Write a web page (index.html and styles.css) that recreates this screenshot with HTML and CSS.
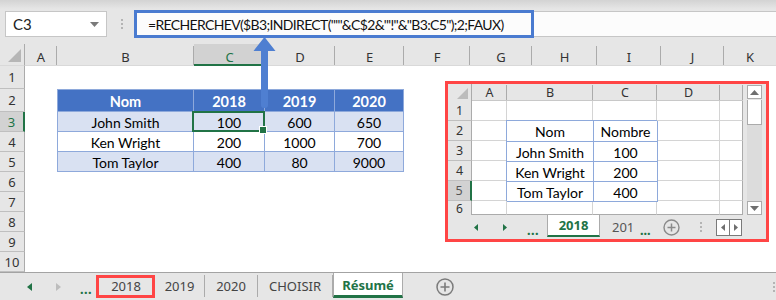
FILE: index.html
```html
<!DOCTYPE html>
<html lang="fr">
<head>
<meta charset="utf-8">
<link rel="stylesheet" href="styles.css">
</head>
<body>
<div class="app">
  <div class="fbar">
    <div class="namebox"><span>C3</span><svg class="dd" width="9" height="5" viewBox="0 0 9 5"><polygon points="0,0 9,0 4.5,5" fill="#7a7a7a"/></svg></div>
    <div class="vdots"><i></i><i></i><i></i></div>
    <div class="finput"><div class="formula">=RECHERCHEV($B3;INDIRECT("'"&amp;C$2&amp;"'!"&amp;"B3:C5");2;FAUX)</div></div>
  </div>

  <div class="sheet">
    <div class="corner"><svg width="13" height="13" viewBox="0 0 13 13"><polygon points="13,0 13,13 0,13" fill="#b6b6b6"/></svg></div>
    <div class="ch">A</div><div class="ch">B</div><div class="ch sel">C</div><div class="ch">D</div><div class="ch">E</div><div class="ch">F</div><div class="ch">G</div><div class="ch">H</div><div class="ch">I</div><div class="ch">J</div><div class="ch last">K</div>
    <div class="rh">1</div><div class="rh">2</div><div class="rh sel">3</div><div class="rh">4</div><div class="rh">5</div><div class="rh">6</div><div class="rh">7</div><div class="rh">8</div><div class="rh">9</div><div class="rh">10</div>

    <div class="tbl">
      <div class="c hd">Nom</div><div class="c hd">2018</div><div class="c hd">2019</div><div class="c hd">2020</div>
      <div class="c band">John Smith</div><div class="c band sel">100</div><div class="c band">600</div><div class="c band">650</div>
      <div class="c">Ken Wright</div><div class="c">200</div><div class="c">1000</div><div class="c">700</div>
      <div class="c band">Tom Taylor</div><div class="c band">400</div><div class="c band">80</div><div class="c band">9000</div>
    </div>
  </div>

  <div class="tabs">
    <div class="nav">
      <svg class="nl" width="5" height="8" viewBox="0 0 5 8"><polygon points="5,0 5,8 0,4" fill="#217346"/></svg>
      <svg class="nr" width="5" height="8" viewBox="0 0 5 8"><polygon points="0,0 0,8 5,4" fill="#bdbdbd"/></svg>
      <span class="more">...</span>
    </div>
    <div class="tab hl" style="width:57px">2018</div>
    <div class="tab" style="width:50px">2019</div>
    <div class="tab" style="width:53px">2020</div>
    <div class="tab" style="width:75px">CHOISIR</div>
    <div class="tab active" style="width:70px">Résumé</div>
    <svg class="plus" width="18" height="18" viewBox="0 0 18 18"><circle cx="9" cy="9" r="8" fill="none" stroke="#7b7b7b" stroke-width="1.5"/><path d="M9 4.5v9M4.5 9h9" stroke="#7b7b7b" stroke-width="1.6"/></svg>
    <div class="rdots"><i></i><i></i><i></i></div>
  </div>

  <svg class="arrow" width="26" height="74" viewBox="0 0 26 74"><path d="M12.5 0 L23.5 14 L16 14 L16 68 Q16 71 13 71 L12 71 Q9 71 9 68 L9 14 L1.5 14 Z" fill="#4f7fd1"/></svg>

  <div class="mini">
    <div class="mtop">
      <div class="msheet">
        <div class="mcorner"><svg width="11" height="11" viewBox="0 0 11 11"><polygon points="11,0 11,11 0,11" fill="#bcbcbc"/></svg></div>
        <div class="mch">A</div><div class="mch">B</div><div class="mch">C</div><div class="mch">D</div><div class="mch"></div>

        <div class="mtbl">
          <div class="mc2">Nom</div><div class="mc2">Nombre</div>
          <div class="mc2">John Smith</div><div class="mc2">100</div>
          <div class="mc2">Ken Wright</div><div class="mc2">200</div>
          <div class="mc2">Tom Taylor</div><div class="mc2">400</div>
        </div>

        <div class="mrh">1</div><div class="mc"></div><div class="mc"></div><div class="mc"></div><div class="mc"></div><div class="mc e"></div>
        <div class="mrh">2</div><div class="mc"></div><div class="mc"></div><div class="mc e"></div>
        <div class="mrh">3</div><div class="mc"></div><div class="mc"></div><div class="mc e"></div>
        <div class="mrh">4</div><div class="mc"></div><div class="mc"></div><div class="mc e"></div>
        <div class="mrh sel">5</div><div class="mc"></div><div class="mc"></div><div class="mc e"></div>
        <div class="mrh cut">6</div><div class="mc cut"></div><div class="mc cut"></div><div class="mc cut"></div><div class="mc cut"></div><div class="mc e cut"></div>
      </div>
      <div class="mscroll">
        <div class="sbtn"><svg width="9" height="5" viewBox="0 0 9 5"><polygon points="0,5 9,5 4.5,0" fill="#6f6f6f"/></svg></div>
        <div class="thumb"></div>
        <div class="track"></div>
        <div class="sbtn"><svg width="9" height="5" viewBox="0 0 9 5"><polygon points="0,0 9,0 4.5,5" fill="#6f6f6f"/></svg></div>
      </div>
    </div>
    <div class="mtabs">
      <svg class="mnl" width="4" height="7" viewBox="0 0 4 7"><polygon points="4,0 4,7 0,3.5" fill="#217346"/></svg>
      <svg class="mnr" width="4" height="7" viewBox="0 0 4 7"><polygon points="0,0 0,7 4,3.5" fill="#217346"/></svg>
      <span class="mmore">...</span>
      <div class="mtab">2018</div>
      <span class="mtab2">201</span>
      <span class="mmore2">...</span>
      <svg class="mplus" width="17" height="17" viewBox="0 0 17 17"><circle cx="8.5" cy="8.5" r="7.5" fill="none" stroke="#8a8a8a" stroke-width="1.4"/><path d="M8.5 4.5v8M4.5 8.5h8" stroke="#8a8a8a" stroke-width="1.5"/></svg>
      <div class="mvdots"><i></i><i></i><i></i></div>
      <div class="mscr">
        <div class="mscb"><svg width="4" height="7" viewBox="0 0 4 7"><polygon points="4,0 4,7 0,3.5" fill="#6f6f6f"/></svg></div>
        <div class="mscb"><svg width="4" height="7" viewBox="0 0 4 7"><polygon points="0,0 0,7 4,3.5" fill="#6f6f6f"/></svg></div>
      </div>
    </div>
  </div>
</div>
</body>
</html>
```

FILE: styles.css
```css
* { box-sizing: border-box; margin: 0; padding: 0; }
html, body { width: 776px; height: 300px; overflow: hidden; background: #fff; }
body { font-family: Lato, "Liberation Sans", sans-serif; color: #000; }
.app { position: relative; width: 776px; height: 300px; display: flex; flex-direction: column; }

/* formula bar */
.fbar { height: 44px; flex: none; display: flex; align-items: flex-start; padding-top: 11px;
  background: linear-gradient(#d3d3d3, #e6e6e6 9px, #e6e6e6); }
.namebox { margin-left: 5px; width: 102px; height: 26px; background: #fff; border: 1px solid #c6c6c6;
  display: flex; align-items: center; justify-content: space-between; padding: 0 7px 0 7px;
  font-size: 15px; color: #222; }
.vdots { width: 27px; height: 26px; display: flex; flex-direction: column; align-items: center; justify-content: center; gap: 2px; padding-left: 3px; }
.vdots i, .rdots i, .mvdots i { display: block; width: 2px; height: 2px; background: #b4b4b4; }
.finput { flex: 1; height: 26px; background: #fcfcfc; border-top: 1px solid #c6c6c6; border-bottom: 1px solid #c6c6c6; }
.formula { width: 400px; height: 28px; margin-top: -2px; border: 3px solid #4a7bd0; padding-left: 11px;
  display: flex; align-items: center; font-size: 14px; letter-spacing: -0.65px; color: #111; white-space: nowrap; }

/* sheet */
.sheet { flex: none; height: 228px; display: grid;
  grid-template-columns: 25px 32px 137px 71px 70px 69px 66px 62px 65px 64px 63px 1fr;
  grid-template-rows: 22px 23px 23px repeat(8, 20px); background: #fff; }
.corner { background: #e6e6e6; border-right: 1px solid #ababab; border-bottom: 1px solid #d9d9d9;
  display: flex; align-items: flex-end; justify-content: flex-end; padding: 0 3px 3px 0; }
.ch { background: linear-gradient(#ababab, #ababab) right bottom / 1px 19px no-repeat, #e6e6e6;
  border-bottom: 1px solid #d9d9d9; display: flex; align-items: center; justify-content: center;
  padding-top: 4px; font-family: "Noto Sans", sans-serif; font-size: 13px; color: #333; }
.ch.last { background: #e6e6e6; }
.ch.sel { background-color: #d2d2d2; color: #217346; border-bottom: 2px solid #217346; padding-top: 5px; }
.rh { grid-column: 1; background: #e6e6e6; border-right: 1px solid #ababab; border-bottom: 1px solid #bfbfbf;
  display: flex; align-items: center; justify-content: center; font-family: "Noto Sans", sans-serif; font-size: 13px; color: #333; }
.rh.sel { background: #d2d2d2; color: #217346; border-right: 2px solid #217346; }

.tbl { grid-column: 3 / 7; grid-row: 3 / 7; display: grid; grid-template-columns: 136px 71px 70px 69px;
  grid-template-rows: 22px 20px 20px 20px; border-left: 1px solid #8ea9db; border-top: 1px solid #8ea9db; }
.c { border-right: 1px solid #8ea9db; border-bottom: 1px solid #8ea9db; display: flex; align-items: center;
  justify-content: center; font-size: 14px; padding-top: 1px; }
.c.hd { background: #4472c4; color: #fff; font-weight: 700; font-size: 14.5px; }
.c.band { background: #d9e1f2; }
.c.sel { position: relative; }
.c.sel::after { content: ""; position: absolute; left: -2px; top: -1px; right: -1px; bottom: -1px; border: 2px solid #217346; }
.c.sel::before { content: ""; position: absolute; right: -3px; bottom: -3px; width: 6px; height: 6px; background: #217346; border: 1px solid #fff; z-index: 2; }

/* tabs */
.tabs { flex: 1; background: #e6e6e6; border-top: 1px solid #a3a3a3; display: flex; align-items: stretch; position: relative; }
.nav { width: 98px; display: flex; align-items: center; }
.nl { margin-left: 27px; }
.nr { margin-left: 24px; }
.more { margin-left: 19px; color: #217346; font-weight: 700; font-size: 15px; letter-spacing: 0.5px; padding-top: 2px; }
.tab { border-right: 1px solid #ababab; margin: 2px 0 3px; display: flex; align-items: center; justify-content: center;
  font-family: "Noto Sans", sans-serif; font-size: 13px; color: #444; }
.tab.hl { position: relative; }
.tab.hl::after { content: ""; position: absolute; left: -2px; top: 0; right: -1px; bottom: -1px; border: 3px solid #ff4545; }
.tab.active { margin: 0 0 2px; background: #fff; border-left: 1px solid #ababab; border-bottom: 3px solid #217346;
  color: #217346; font-weight: 700; padding-top: 2px; }
.plus { align-self: center; margin-left: 33px; }
.rdots { margin-left: auto; margin-right: 1px; display: flex; flex-direction: column; justify-content: center; gap: 2px; }

/* arrow */
.arrow { position: absolute; left: 252px; top: 37px; }

/* mini screenshot */
.mini { position: absolute; left: 445px; top: 81px; width: 324px; height: 161px; border: 3px solid #ff4545;
  background: #e6e6e6; display: flex; flex-direction: column; }
.mtop { display: flex; height: 131px; }
.msheet { width: 295px; display: grid; grid-template-columns: 24px 35px 86px 64px 63px 23px;
  grid-template-rows: 17px 20px 20px 20px 20px 20px 14px; }
.mcorner { border-right: 1px solid #ababab; display: flex; align-items: flex-end; justify-content: flex-end; padding: 0 3px 2px 0; }
.mch { background: linear-gradient(#ababab, #ababab) right bottom / 1px 15px no-repeat, #e6e6e6;
  border-bottom: 1px solid #c8c8c8; display: flex; align-items: center; justify-content: center;
  font-family: "Noto Sans", sans-serif; font-size: 12.5px; color: #333; padding-top: 1px; }
.mrh { grid-column: 1; border-right: 1px solid #ababab; border-bottom: 1px solid #bfbfbf; display: flex; align-items: center;
  justify-content: center; font-family: "Noto Sans", sans-serif; font-size: 12.5px; color: #333; }
.mrh.sel { background: #d2d2d2; border-right: 2px solid #217346; color: #555; }
.mrh.cut { border-bottom: none; align-items: flex-start; line-height: 13px; padding-top: 1px; font-size: 12px; }
.mc { background: #fff; border-right: 1px solid #d4d4d4; border-bottom: 1px solid #d4d4d4; }
.mc.e { border-right: 1px solid #ababab; }
.mc.cut { border-bottom: 1px solid #ababab; }
.mtbl { grid-column: 3 / 5; grid-row: 3 / 7; margin: -1px 0 0 -1px; display: grid; grid-template-columns: 87px 64px;
  grid-template-rows: 21px 20px 20px 20px; border-left: 1px solid #8ea9db; border-top: 1px solid #8ea9db; background: #fff; position: relative; z-index: 1; }
.mc2 { border-right: 1px solid #8ea9db; border-bottom: 1px solid #8ea9db; display: flex; align-items: center; justify-content: center;
  font-size: 14px; padding-top: 1px; }
.mscroll { width: 23px; padding: 1px 4px 0; display: flex; flex-direction: column; }
.sbtn { height: 14px; flex: none; background: #fff; border: 1px solid #ababab; display: flex; align-items: center; justify-content: center; }
.thumb { height: 25px; flex: none; background: #fff; border: 1px solid #ababab; border-top: none; margin-top: 1px; }
.track { flex: 1; background: #dcdcdc; }
.mtabs { flex: 1; display: flex; align-items: center; }
.mnl { margin-left: 26px; }
.mnr { margin-left: 25px; }
.mmore { margin-left: 20px; width: 16px; color: #217346; font-weight: 700; font-size: 15px; letter-spacing: 0.5px; padding-top: 3px; }
.mtab { margin-left: 4px; width: 53px; align-self: stretch; margin-bottom: 2px; background: #fff; border-left: 1px solid #ababab;
  border-right: 1px solid #ababab; border-bottom: 2px solid #217346; display: flex; align-items: center; justify-content: center;
  font-family: "Noto Sans", sans-serif; font-weight: 700; font-size: 13px; color: #217346; }
.mtab2 { margin-left: 12px; width: 20px; font-family: "Noto Sans", sans-serif; font-size: 13px; color: #555; }
.mmore2 { margin-left: 8px; width: 12px; color: #217346; font-weight: 700; font-size: 15px; padding-top: 3px; }
.mplus { margin-left: 11px; }
.mvdots { margin-left: 20px; display: flex; flex-direction: column; gap: 2px; }
.mscr { margin-left: 14px; display: flex; border: 1px solid #7a7a7a; background: #fff; height: 17px; }
.mscb { width: 12px; display: flex; align-items: center; justify-content: center; }
.mscb + .mscb { border-left: 1px solid #7a7a7a; }
```
